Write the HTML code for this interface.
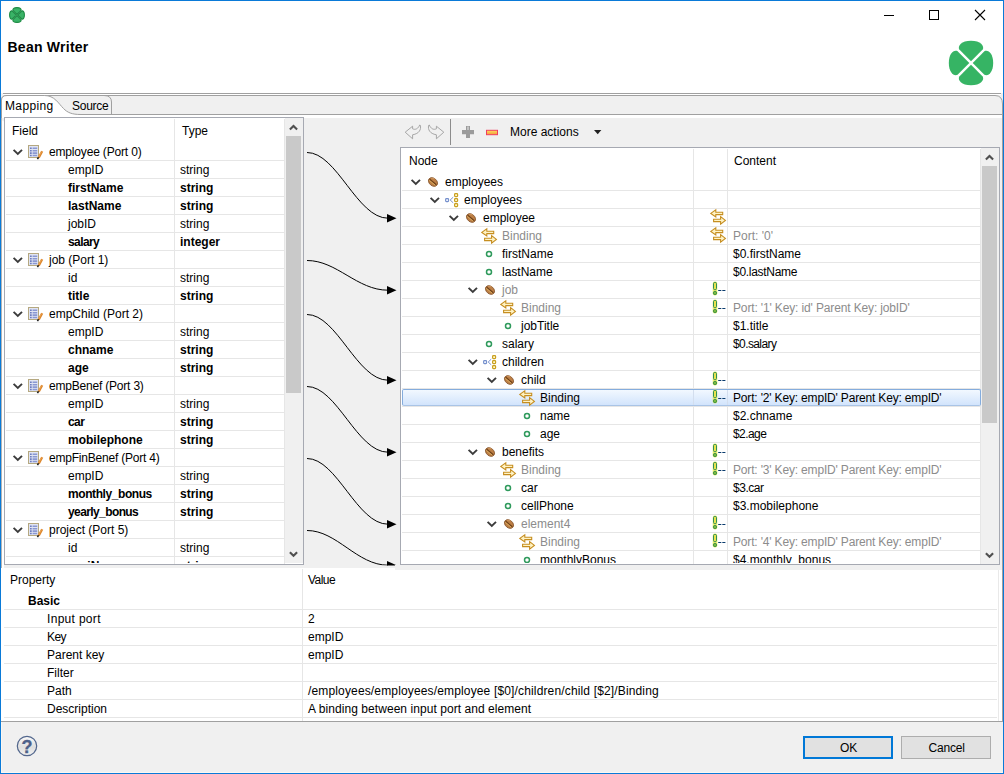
<!DOCTYPE html>
<html lang="en"><head><meta charset="utf-8"><title>Bean Writer</title>
<style>
*{box-sizing:border-box;margin:0;padding:0}
html,body{width:1004px;height:774px;overflow:hidden;background:#f0f0f0}
body{position:relative;font-family:"Liberation Sans",sans-serif;font-size:12px;color:#000;line-height:18px}
.a{position:absolute}
.t{position:absolute;white-space:pre;height:18px;line-height:18px}
.b{font-weight:bold}
.g{color:#8c8c8c}
.hl{position:absolute;height:1px;background:#e6e6e6}
.vl{position:absolute;width:1px;background:#e6e6e6}
svg{position:absolute;overflow:visible}
</style></head>
<body>
<div class="a" style="left:1px;top:1px;width:1002px;height:92px;background:#fff;"></div>
<svg style="left:880px;top:5px" width="110" height="20" viewBox="880 5 110 20" fill="none" stroke="#000" stroke-width="1"><path d="M884 15.5H894"/><rect x="929.5" y="10.5" width="9" height="9"/><path d="M975 10L985 20M985 10L975 20" stroke-width="1.1"/></svg>
<svg style="left:9px;top:7px" width="16" height="16" viewBox="-8 -8 16 16"><g fill="#3ab367" stroke="#1d8a44" stroke-width="1.100" stroke-linejoin="round"><path transform="rotate(0)" d="M0 -0.600L-4 -4.700C-4.600 -6.100 -3.100 -7.400 0 -7.400C3.100 -7.400 4.600 -6.100 4 -4.700Z"/><path transform="rotate(90)" d="M0 -0.600L-4 -4.700C-4.600 -6.100 -3.100 -7.400 0 -7.400C3.100 -7.400 4.600 -6.100 4 -4.700Z"/><path transform="rotate(180)" d="M0 -0.600L-4 -4.700C-4.600 -6.100 -3.100 -7.400 0 -7.400C3.100 -7.400 4.600 -6.100 4 -4.700Z"/><path transform="rotate(270)" d="M0 -0.600L-4 -4.700C-4.600 -6.100 -3.100 -7.400 0 -7.400C3.100 -7.400 4.600 -6.100 4 -4.700Z"/></g></svg>
<div class="t b" style="left:7.500px;top:37px;font-size:14px;height:20px;line-height:20px;letter-spacing:0.250px">Bean Writer</div>
<svg style="left:948px;top:40px" width="46" height="46" viewBox="-23 -23 46 46"><g fill="#36b464"><path transform="rotate(0)" d="M0 -1.700L-11.700 -13.400C-13.700 -17 -9.500 -22.200 0 -22.200C9.500 -22.200 13.700 -17 11.700 -13.400Z"/><path transform="rotate(90)" d="M0 -1.700L-11.700 -13.400C-13.700 -17 -9.500 -22.200 0 -22.200C9.500 -22.200 13.700 -17 11.700 -13.400Z"/><path transform="rotate(180)" d="M0 -1.700L-11.700 -13.400C-13.700 -17 -9.500 -22.200 0 -22.200C9.500 -22.200 13.700 -17 11.700 -13.400Z"/><path transform="rotate(270)" d="M0 -1.700L-11.700 -13.400C-13.700 -17 -9.500 -22.200 0 -22.200C9.500 -22.200 13.700 -17 11.700 -13.400Z"/></g></svg>
<div class="a" style="left:3px;top:93px;width:998px;height:1px;background:#a0a0a0;"></div>
<div class="a" style="left:3px;top:94px;width:998px;height:1px;background:#fff;"></div>
<div class="a" style="left:1px;top:114px;width:1001px;height:608px;background:#fff;"></div>
<div class="a" style="left:4px;top:115px;width:996px;height:453px;background:#f0f0f0;"></div>
<svg style="left:0px;top:94px" width="1004" height="24" viewBox="0 94 1004 24" fill="none"><path d="M1.5 120V100Q1.5 95.5 7 95.5H995Q1002.5 95.5 1002.5 104V722" stroke="#a0a0a0" fill="#f0f0f0"/><path d="M1.5 115V100Q1.5 95.5 7 95.5H44.500C54.500 95.5 58.500 103.500 63.500 108.500C67.500 112.500 71.500 114.5 81 114.5H1002V118H1.5Z" fill="#fff" stroke="none"/><path d="M1.5 118V100Q1.5 95.5 7 95.5H44.500C54.500 95.5 58.500 103.500 63.500 108.500C67.500 112.500 71.500 114.5 81 114.5H1002.5" stroke="#a0a0a0"/><path d="M104 95.5Q111.500 95.5 111.500 102V114" stroke="#a0a0a0"/></svg>
<div class="a" style="left:1002px;top:118px;width:1px;height:604px;background:#a0a0a0;"></div>
<div class="a" style="left:1px;top:118px;width:1px;height:604px;background:#b4b4b4;"></div>
<div class="t" style="left:5px;top:97px;letter-spacing:0.37px;">Mapping</div>
<div class="t" style="left:72px;top:97px;letter-spacing:-0.25px;">Source</div>
<div class="a" style="left:4px;top:117px;width:300px;height:448px;background:#fff;border:1px solid #a6a9b2;"></div>
<div class="a" style="left:285px;top:118px;width:18px;height:445px;background:#f0f0f0;"></div>
<div class="a" style="left:286px;top:136px;width:15px;height:257px;background:#c9c9c9;"></div>
<svg style="left:289px;top:124px" width="9" height="7" viewBox="0 0 9 7" fill="none" stroke="#505050" stroke-width="2.100"><path d="M0.900 5.600L4.500 2L8.100 5.600"/></svg>
<svg style="left:289px;top:551px" width="9" height="7" viewBox="0 0 9 7" fill="none" stroke="#505050" stroke-width="2.100"><path d="M0.900 1.200L4.500 4.800L8.100 1.200"/></svg>
<div class="t" style="left:12px;top:122px;">Field</div>
<div class="t" style="left:182px;top:122px;">Type</div>
<div class="a" style="left:174px;top:119px;width:1px;height:445px;background:#e6e6e6;"></div>
<div class="a" style="left:284px;top:119px;width:1px;height:445px;background:#e6e6e6;"></div>
<div class="a" style="left:5px;top:118px;width:280px;height:445px;overflow:hidden">
<div class="hl" style="left:1px;top:42px;width:279px"></div>
<svg style="left:8px;top:31px" width="10" height="7" viewBox="0 0 10 7" fill="none" stroke="#3c3c3c" stroke-width="1.9"><path d="M0.600 0.800L4.800 5L9 0.800"/></svg>
<svg style="left:23px;top:27px" width="17" height="15" viewBox="0 0 17 15"><rect x="0.5" y="0.5" width="10" height="12" fill="#e0e4f3" stroke="#b5a880"/><path d="M2 3.300H3.700M2 5.700H3.700M2 8.100H3.700M2 10.500H3.700" stroke="#6c7cc0" stroke-width="1.600"/><path d="M4.600 3.300H9.200M4.600 5.700H9.200M4.600 8.100H9.200M4.600 10.500H9.200" stroke="#8a98d2" stroke-width="1.600"/><path d="M14.200 6.300L10.700 12.600" stroke="#dc862c" stroke-width="2.300"/><path d="M13.600 6.500L10.300 12.500" stroke="#f0ac5c" stroke-width="0.700"/><path d="M10.600 12.300L9.400 14.100" stroke="#222" stroke-width="1.600"/></svg>
<div class="t" style="left:44px;top:25px;letter-spacing:-0.17px;">employee (Port 0)</div>
<div class="hl" style="left:1px;top:60px;width:279px"></div>
<div class="t" style="left:63px;top:43px;">empID</div>
<div class="t" style="left:175px;top:43px;">string</div>
<div class="hl" style="left:1px;top:78px;width:279px"></div>
<div class="t b" style="left:63px;top:61px;">firstName</div>
<div class="t b" style="left:175px;top:61px;">string</div>
<div class="hl" style="left:1px;top:96px;width:279px"></div>
<div class="t b" style="left:63px;top:79px;">lastName</div>
<div class="t b" style="left:175px;top:79px;">string</div>
<div class="hl" style="left:1px;top:114px;width:279px"></div>
<div class="t" style="left:63px;top:97px;">jobID</div>
<div class="t" style="left:175px;top:97px;">string</div>
<div class="hl" style="left:1px;top:132px;width:279px"></div>
<div class="t b" style="left:63px;top:115px;letter-spacing:-0.6px;">salary</div>
<div class="t b" style="left:175px;top:115px;">integer</div>
<div class="hl" style="left:1px;top:150px;width:279px"></div>
<svg style="left:8px;top:139px" width="10" height="7" viewBox="0 0 10 7" fill="none" stroke="#3c3c3c" stroke-width="1.9"><path d="M0.600 0.800L4.800 5L9 0.800"/></svg>
<svg style="left:23px;top:135px" width="17" height="15" viewBox="0 0 17 15"><rect x="0.5" y="0.5" width="10" height="12" fill="#e0e4f3" stroke="#b5a880"/><path d="M2 3.300H3.700M2 5.700H3.700M2 8.100H3.700M2 10.500H3.700" stroke="#6c7cc0" stroke-width="1.600"/><path d="M4.600 3.300H9.200M4.600 5.700H9.200M4.600 8.100H9.200M4.600 10.500H9.200" stroke="#8a98d2" stroke-width="1.600"/><path d="M14.200 6.300L10.700 12.600" stroke="#dc862c" stroke-width="2.300"/><path d="M13.600 6.500L10.300 12.500" stroke="#f0ac5c" stroke-width="0.700"/><path d="M10.600 12.300L9.400 14.100" stroke="#222" stroke-width="1.600"/></svg>
<div class="t" style="left:44px;top:133px;">job (Port 1)</div>
<div class="hl" style="left:1px;top:168px;width:279px"></div>
<div class="t" style="left:63px;top:151px;">id</div>
<div class="t" style="left:175px;top:151px;">string</div>
<div class="hl" style="left:1px;top:186px;width:279px"></div>
<div class="t b" style="left:63px;top:169px;">title</div>
<div class="t b" style="left:175px;top:169px;">string</div>
<div class="hl" style="left:1px;top:204px;width:279px"></div>
<svg style="left:8px;top:193px" width="10" height="7" viewBox="0 0 10 7" fill="none" stroke="#3c3c3c" stroke-width="1.9"><path d="M0.600 0.800L4.800 5L9 0.800"/></svg>
<svg style="left:23px;top:189px" width="17" height="15" viewBox="0 0 17 15"><rect x="0.5" y="0.5" width="10" height="12" fill="#e0e4f3" stroke="#b5a880"/><path d="M2 3.300H3.700M2 5.700H3.700M2 8.100H3.700M2 10.500H3.700" stroke="#6c7cc0" stroke-width="1.600"/><path d="M4.600 3.300H9.200M4.600 5.700H9.200M4.600 8.100H9.200M4.600 10.500H9.200" stroke="#8a98d2" stroke-width="1.600"/><path d="M14.200 6.300L10.700 12.600" stroke="#dc862c" stroke-width="2.300"/><path d="M13.600 6.500L10.300 12.500" stroke="#f0ac5c" stroke-width="0.700"/><path d="M10.600 12.300L9.400 14.100" stroke="#222" stroke-width="1.600"/></svg>
<div class="t" style="left:44px;top:187px;">empChild (Port 2)</div>
<div class="hl" style="left:1px;top:222px;width:279px"></div>
<div class="t" style="left:63px;top:205px;">empID</div>
<div class="t" style="left:175px;top:205px;">string</div>
<div class="hl" style="left:1px;top:240px;width:279px"></div>
<div class="t b" style="left:63px;top:223px;">chname</div>
<div class="t b" style="left:175px;top:223px;">string</div>
<div class="hl" style="left:1px;top:258px;width:279px"></div>
<div class="t b" style="left:63px;top:241px;">age</div>
<div class="t b" style="left:175px;top:241px;">string</div>
<div class="hl" style="left:1px;top:276px;width:279px"></div>
<svg style="left:8px;top:265px" width="10" height="7" viewBox="0 0 10 7" fill="none" stroke="#3c3c3c" stroke-width="1.9"><path d="M0.600 0.800L4.800 5L9 0.800"/></svg>
<svg style="left:23px;top:261px" width="17" height="15" viewBox="0 0 17 15"><rect x="0.5" y="0.5" width="10" height="12" fill="#e0e4f3" stroke="#b5a880"/><path d="M2 3.300H3.700M2 5.700H3.700M2 8.100H3.700M2 10.500H3.700" stroke="#6c7cc0" stroke-width="1.600"/><path d="M4.600 3.300H9.200M4.600 5.700H9.200M4.600 8.100H9.200M4.600 10.500H9.200" stroke="#8a98d2" stroke-width="1.600"/><path d="M14.200 6.300L10.700 12.600" stroke="#dc862c" stroke-width="2.300"/><path d="M13.600 6.500L10.300 12.500" stroke="#f0ac5c" stroke-width="0.700"/><path d="M10.600 12.300L9.400 14.100" stroke="#222" stroke-width="1.600"/></svg>
<div class="t" style="left:44px;top:259px;letter-spacing:-0.2px;">empBenef (Port 3)</div>
<div class="hl" style="left:1px;top:294px;width:279px"></div>
<div class="t" style="left:63px;top:277px;">empID</div>
<div class="t" style="left:175px;top:277px;">string</div>
<div class="hl" style="left:1px;top:312px;width:279px"></div>
<div class="t b" style="left:63px;top:295px;letter-spacing:-0.6px;">car</div>
<div class="t b" style="left:175px;top:295px;">string</div>
<div class="hl" style="left:1px;top:330px;width:279px"></div>
<div class="t b" style="left:63px;top:313px;">mobilephone</div>
<div class="t b" style="left:175px;top:313px;">string</div>
<div class="hl" style="left:1px;top:348px;width:279px"></div>
<svg style="left:8px;top:337px" width="10" height="7" viewBox="0 0 10 7" fill="none" stroke="#3c3c3c" stroke-width="1.9"><path d="M0.600 0.800L4.800 5L9 0.800"/></svg>
<svg style="left:23px;top:333px" width="17" height="15" viewBox="0 0 17 15"><rect x="0.5" y="0.5" width="10" height="12" fill="#e0e4f3" stroke="#b5a880"/><path d="M2 3.300H3.700M2 5.700H3.700M2 8.100H3.700M2 10.500H3.700" stroke="#6c7cc0" stroke-width="1.600"/><path d="M4.600 3.300H9.200M4.600 5.700H9.200M4.600 8.100H9.200M4.600 10.500H9.200" stroke="#8a98d2" stroke-width="1.600"/><path d="M14.200 6.300L10.700 12.600" stroke="#dc862c" stroke-width="2.300"/><path d="M13.600 6.500L10.300 12.500" stroke="#f0ac5c" stroke-width="0.700"/><path d="M10.600 12.300L9.400 14.100" stroke="#222" stroke-width="1.600"/></svg>
<div class="t" style="left:44px;top:331px;letter-spacing:-0.21px;">empFinBenef (Port 4)</div>
<div class="hl" style="left:1px;top:366px;width:279px"></div>
<div class="t" style="left:63px;top:349px;">empID</div>
<div class="t" style="left:175px;top:349px;">string</div>
<div class="hl" style="left:1px;top:384px;width:279px"></div>
<div class="t b" style="left:63px;top:367px;letter-spacing:-0.42px;">monthly_bonus</div>
<div class="t b" style="left:175px;top:367px;">string</div>
<div class="hl" style="left:1px;top:402px;width:279px"></div>
<div class="t b" style="left:63px;top:385px;letter-spacing:-0.6px;">yearly_bonus</div>
<div class="t b" style="left:175px;top:385px;">string</div>
<div class="hl" style="left:1px;top:420px;width:279px"></div>
<svg style="left:8px;top:409px" width="10" height="7" viewBox="0 0 10 7" fill="none" stroke="#3c3c3c" stroke-width="1.9"><path d="M0.600 0.800L4.800 5L9 0.800"/></svg>
<svg style="left:23px;top:405px" width="17" height="15" viewBox="0 0 17 15"><rect x="0.5" y="0.5" width="10" height="12" fill="#e0e4f3" stroke="#b5a880"/><path d="M2 3.300H3.700M2 5.700H3.700M2 8.100H3.700M2 10.500H3.700" stroke="#6c7cc0" stroke-width="1.600"/><path d="M4.600 3.300H9.200M4.600 5.700H9.200M4.600 8.100H9.200M4.600 10.500H9.200" stroke="#8a98d2" stroke-width="1.600"/><path d="M14.200 6.300L10.700 12.600" stroke="#dc862c" stroke-width="2.300"/><path d="M13.600 6.500L10.300 12.500" stroke="#f0ac5c" stroke-width="0.700"/><path d="M10.600 12.300L9.400 14.100" stroke="#222" stroke-width="1.600"/></svg>
<div class="t" style="left:44px;top:403px;">project (Port 5)</div>
<div class="hl" style="left:1px;top:438px;width:279px"></div>
<div class="t" style="left:63px;top:421px;">id</div>
<div class="t" style="left:175px;top:421px;">string</div>
<div class="hl" style="left:1px;top:456px;width:279px"></div>
<div class="t b" style="left:63px;top:439px;">projName</div>
<div class="t b" style="left:175px;top:439px;">string</div>
</div>
<svg style="left:304px;top:118px" width="96" height="448" viewBox="304 118 96 448"><defs><clipPath id="cc"><rect x="304" y="118" width="96" height="447.500"/></clipPath></defs><g clip-path="url(#cc)" fill="none" stroke="#000" stroke-width="1"><path d="M307 152.5C337 152.5 357 218.2 388 218.2"/><path d="M387 214L396.5 218.2L387 222.4Z" fill="#000" stroke="none"/><path d="M307 260.5C337 260.5 357 290.2 388 290.2"/><path d="M387 286L396.5 290.2L387 294.4Z" fill="#000" stroke="none"/><path d="M307 314.5C337 314.5 357 380.2 388 380.2"/><path d="M387 376L396.5 380.2L387 384.4Z" fill="#000" stroke="none"/><path d="M307 386.5C337 386.5 357 452.2 388 452.2"/><path d="M387 448L396.5 452.2L387 456.4Z" fill="#000" stroke="none"/><path d="M307 458.5C337 458.5 357 524.2 388 524.2"/><path d="M387 520L396.5 524.2L387 528.4Z" fill="#000" stroke="none"/><path d="M307 530.5C337 530.5 357 565.2 388 565.2"/><path d="M387 561L396.5 565.2L387 569.4Z" fill="#000" stroke="none"/></g></svg>
<svg style="left:404px;top:119px" width="100" height="26" viewBox="404 119 100 26" fill="none"><path d="M405.200 132.200L412.600 126.200V128.800C415.500 130.200 418.200 128.600 419.700 125L420.400 125.400C421.200 129.500 419.400 133.600 412.600 134.800V138.800Z" stroke="#a6a6a6" stroke-width="1"/><path d="M443.800 132.200L436.400 126.200V128.800C433.500 130.200 430.800 128.600 429.300 125L428.600 125.400C427.800 129.500 429.600 133.600 436.400 134.800V138.800Z" stroke="#a6a6a6" stroke-width="1"/><path d="M450.500 119V145" stroke="#8c8c8c"/><path d="M466 126H470V130H474V134.300H470V138H466V134.300H462V130H466Z" fill="#9b9b9b"/><path d="M467 126.500H469V130H467Z" fill="#c4c4c4"/><defs><linearGradient id="mg" x1="0" y1="0" x2="0" y2="1"><stop offset="0" stop-color="#fbe060"/><stop offset="1" stop-color="#f49a3a"/></linearGradient></defs><rect x="486.500" y="130.300" width="11" height="4.400" fill="url(#mg)" stroke="#f03e5e"/></svg>
<div class="t" style="left:510px;top:123px;">More actions</div>
<svg style="left:594.300px;top:130px" width="8" height="5" viewBox="0 0 8 5"><path d="M0 0H7.400L3.700 4.300Z" fill="#202020"/></svg>
<div class="a" style="left:400px;top:147px;width:600px;height:418px;background:#fff;border:1px solid #a6a9b2;"></div>
<div class="a" style="left:981px;top:148px;width:18px;height:416px;background:#f0f0f0;"></div>
<div class="a" style="left:982px;top:166px;width:15px;height:257px;background:#c9c9c9;"></div>
<svg style="left:985px;top:154px" width="9" height="7" viewBox="0 0 9 7" fill="none" stroke="#505050" stroke-width="2.100"><path d="M0.900 5.600L4.500 2L8.100 5.600"/></svg>
<svg style="left:985px;top:552px" width="9" height="7" viewBox="0 0 9 7" fill="none" stroke="#505050" stroke-width="2.100"><path d="M0.900 1.200L4.500 4.800L8.100 1.200"/></svg>
<div class="a" style="left:693px;top:149px;width:1px;height:415px;background:#e6e6e6;"></div>
<div class="a" style="left:727px;top:149px;width:1px;height:415px;background:#e6e6e6;"></div>
<div class="a" style="left:980px;top:149px;width:1px;height:415px;background:#e6e6e6;"></div>
<div class="t" style="left:409px;top:152px;">Node</div>
<div class="t" style="left:734px;top:152px;">Content</div>
<div class="a" style="left:401px;top:148px;width:580px;height:415px;overflow:hidden">
<div class="hl" style="left:1px;top:42px;width:579px"></div>
<svg style="left:10px;top:31px" width="10" height="7" viewBox="0 0 10 7" fill="none" stroke="#3c3c3c" stroke-width="1.9"><path d="M0.600 0.800L4.800 5L9 0.800"/></svg>
<svg style="left:27px;top:29px" width="10" height="10" viewBox="0 0 10 10"><ellipse cx="5" cy="5" rx="5" ry="3.700" transform="rotate(40 5 5)" fill="#bd7f45" stroke="#86542a" stroke-width="0.900"/><path d="M1.700 2.300L8.300 7.700" stroke="#6e4019" stroke-width="1.200"/><path d="M1.300 3.300L7.300 8.300" stroke="#ecc46c" stroke-width="0.700"/><path d="M3.200 1.500Q5 0.900 6.800 1.800" stroke="#dca56a" stroke-width="0.700" fill="none"/></svg>
<div class="t" style="left:44px;top:25px;">employees</div>
<div class="hl" style="left:1px;top:60px;width:579px"></div>
<svg style="left:29px;top:49px" width="10" height="7" viewBox="0 0 10 7" fill="none" stroke="#3c3c3c" stroke-width="1.9"><path d="M0.600 0.800L4.800 5L9 0.800"/></svg>
<svg style="left:44px;top:45px" width="14" height="14" viewBox="0 0 14 14" fill="none"><rect x="0.600" y="5.600" width="3" height="3" rx="0.800" stroke="#7590cc" stroke-width="1.100" fill="#eef2fd"/><path d="M5.200 7L8.200 4.200M5.200 7L8.200 9.800" stroke="#6a86c4" stroke-width="0.900"/><rect x="9.600" y="0.600" width="3" height="3" rx="0.800" stroke="#c9a01f" stroke-width="1.200" fill="#fff8d0"/><rect x="9.600" y="5.600" width="3" height="3" rx="0.800" stroke="#c9a01f" stroke-width="1.200" fill="#fff8d0"/><rect x="9.600" y="10.600" width="3" height="3" rx="0.800" stroke="#c9a01f" stroke-width="1.200" fill="#fff8d0"/></svg>
<div class="t" style="left:63px;top:43px;">employees</div>
<div class="hl" style="left:1px;top:78px;width:579px"></div>
<svg style="left:48px;top:67px" width="10" height="7" viewBox="0 0 10 7" fill="none" stroke="#3c3c3c" stroke-width="1.9"><path d="M0.600 0.800L4.800 5L9 0.800"/></svg>
<svg style="left:65px;top:65px" width="10" height="10" viewBox="0 0 10 10"><ellipse cx="5" cy="5" rx="5" ry="3.700" transform="rotate(40 5 5)" fill="#bd7f45" stroke="#86542a" stroke-width="0.900"/><path d="M1.700 2.300L8.300 7.700" stroke="#6e4019" stroke-width="1.200"/><path d="M1.300 3.300L7.300 8.300" stroke="#ecc46c" stroke-width="0.700"/><path d="M3.200 1.500Q5 0.900 6.800 1.800" stroke="#dca56a" stroke-width="0.700" fill="none"/></svg>
<div class="t" style="left:82px;top:61px;">employee</div>
<svg style="left:309px;top:61px" width="16" height="16" viewBox="0 0 16 16" fill="#fff3c4" stroke="#c68e20" stroke-width="1.1" stroke-linejoin="miter"><path d="M0.800 4.400L5.800 0.800V3.200H12.700V5.600H5.800V8Z"/><path d="M15.400 11.400L10.600 7.600V10.200H3.600V12.600H10.600V15.200Z"/></svg>
<div class="hl" style="left:1px;top:96px;width:579px"></div>
<svg style="left:80px;top:80px" width="16" height="16" viewBox="0 0 16 16" fill="#fff3c4" stroke="#c68e20" stroke-width="1.1" stroke-linejoin="miter"><path d="M0.800 4.400L5.800 0.800V3.200H12.700V5.600H5.800V8Z"/><path d="M15.400 11.400L10.600 7.600V10.200H3.600V12.600H10.600V15.200Z"/></svg>
<div class="t g" style="left:101px;top:79px;">Binding</div>
<svg style="left:309px;top:79px" width="16" height="16" viewBox="0 0 16 16" fill="#fff3c4" stroke="#c68e20" stroke-width="1.1" stroke-linejoin="miter"><path d="M0.800 4.400L5.800 0.800V3.200H12.700V5.600H5.800V8Z"/><path d="M15.400 11.400L10.600 7.600V10.200H3.600V12.600H10.600V15.200Z"/></svg>
<div class="t g" style="left:332px;top:79px;">Port: '0'</div>
<div class="hl" style="left:1px;top:114px;width:579px"></div>
<svg style="left:84px;top:102px" width="8" height="8" viewBox="0 0 8 8"><circle cx="4" cy="4" r="2.500" fill="#fff" stroke="#2f9a5c" stroke-width="1.5"/></svg>
<div class="t" style="left:101px;top:97px;">firstName</div>
<div class="t" style="left:332px;top:97px;">$0.firstName</div>
<div class="hl" style="left:1px;top:132px;width:579px"></div>
<svg style="left:84px;top:120px" width="8" height="8" viewBox="0 0 8 8"><circle cx="4" cy="4" r="2.500" fill="#fff" stroke="#2f9a5c" stroke-width="1.5"/></svg>
<div class="t" style="left:101px;top:115px;">lastName</div>
<div class="t" style="left:332px;top:115px;letter-spacing:-0.29px;">$0.lastName</div>
<div class="hl" style="left:1px;top:150px;width:579px"></div>
<svg style="left:67px;top:139px" width="10" height="7" viewBox="0 0 10 7" fill="none" stroke="#3c3c3c" stroke-width="1.9"><path d="M0.600 0.800L4.800 5L9 0.800"/></svg>
<svg style="left:84px;top:137px" width="10" height="10" viewBox="0 0 10 10"><ellipse cx="5" cy="5" rx="5" ry="3.700" transform="rotate(40 5 5)" fill="#bd7f45" stroke="#86542a" stroke-width="0.900"/><path d="M1.700 2.300L8.300 7.700" stroke="#6e4019" stroke-width="1.200"/><path d="M1.300 3.300L7.300 8.300" stroke="#ecc46c" stroke-width="0.700"/><path d="M3.200 1.500Q5 0.900 6.800 1.800" stroke="#dca56a" stroke-width="0.700" fill="none"/></svg>
<div class="t g" style="left:101px;top:133px;">job</div>
<svg style="left:311px;top:133px" width="15" height="15" viewBox="0 0 15 15"><rect x="0.700" y="0.500" width="4.600" height="14" rx="2.200" fill="#eef05a" opacity="0.85"/><rect x="1.500" y="1.400" width="3" height="7.300" rx="1.300" fill="#e8e44c" stroke="#2f8f58" stroke-width="1"/><circle cx="3" cy="12" r="1.700" fill="#7cba3c" stroke="#3a9048" stroke-width="0.9"/><path d="M6.200 9.500H9.300M10.300 9.500H13.400" stroke="#0b3c6e" stroke-width="1.200"/></svg>
<div class="hl" style="left:1px;top:168px;width:579px"></div>
<svg style="left:99px;top:152px" width="16" height="16" viewBox="0 0 16 16" fill="#fff3c4" stroke="#c68e20" stroke-width="1.1" stroke-linejoin="miter"><path d="M0.800 4.400L5.800 0.800V3.200H12.700V5.600H5.800V8Z"/><path d="M15.400 11.400L10.600 7.600V10.200H3.600V12.600H10.600V15.200Z"/></svg>
<div class="t g" style="left:120px;top:151px;">Binding</div>
<svg style="left:311px;top:151px" width="15" height="15" viewBox="0 0 15 15"><rect x="0.700" y="0.500" width="4.600" height="14" rx="2.200" fill="#eef05a" opacity="0.85"/><rect x="1.500" y="1.400" width="3" height="7.300" rx="1.300" fill="#e8e44c" stroke="#2f8f58" stroke-width="1"/><circle cx="3" cy="12" r="1.700" fill="#7cba3c" stroke="#3a9048" stroke-width="0.9"/><path d="M6.200 9.500H9.300M10.300 9.500H13.400" stroke="#0b3c6e" stroke-width="1.200"/></svg>
<div class="t g" style="left:332px;top:151px;letter-spacing:-0.14px;">Port: '1' Key: id' Parent Key: jobID'</div>
<div class="hl" style="left:1px;top:186px;width:579px"></div>
<svg style="left:103px;top:174px" width="8" height="8" viewBox="0 0 8 8"><circle cx="4" cy="4" r="2.500" fill="#fff" stroke="#2f9a5c" stroke-width="1.5"/></svg>
<div class="t" style="left:120px;top:169px;">jobTitle</div>
<div class="t" style="left:332px;top:169px;">$1.title</div>
<div class="hl" style="left:1px;top:204px;width:579px"></div>
<svg style="left:84px;top:192px" width="8" height="8" viewBox="0 0 8 8"><circle cx="4" cy="4" r="2.500" fill="#fff" stroke="#2f9a5c" stroke-width="1.5"/></svg>
<div class="t" style="left:101px;top:187px;">salary</div>
<div class="t" style="left:332px;top:187px;letter-spacing:-0.6px;">$0.salary</div>
<div class="hl" style="left:1px;top:222px;width:579px"></div>
<svg style="left:67px;top:211px" width="10" height="7" viewBox="0 0 10 7" fill="none" stroke="#3c3c3c" stroke-width="1.9"><path d="M0.600 0.800L4.800 5L9 0.800"/></svg>
<svg style="left:82px;top:207px" width="14" height="14" viewBox="0 0 14 14" fill="none"><rect x="0.600" y="5.600" width="3" height="3" rx="0.800" stroke="#7590cc" stroke-width="1.100" fill="#eef2fd"/><path d="M5.200 7L8.200 4.200M5.200 7L8.200 9.800" stroke="#6a86c4" stroke-width="0.900"/><rect x="9.600" y="0.600" width="3" height="3" rx="0.800" stroke="#c9a01f" stroke-width="1.200" fill="#fff8d0"/><rect x="9.600" y="5.600" width="3" height="3" rx="0.800" stroke="#c9a01f" stroke-width="1.200" fill="#fff8d0"/><rect x="9.600" y="10.600" width="3" height="3" rx="0.800" stroke="#c9a01f" stroke-width="1.200" fill="#fff8d0"/></svg>
<div class="t" style="left:101px;top:205px;">children</div>
<div class="hl" style="left:1px;top:240px;width:579px"></div>
<svg style="left:86px;top:229px" width="10" height="7" viewBox="0 0 10 7" fill="none" stroke="#3c3c3c" stroke-width="1.9"><path d="M0.600 0.800L4.800 5L9 0.800"/></svg>
<svg style="left:103px;top:227px" width="10" height="10" viewBox="0 0 10 10"><ellipse cx="5" cy="5" rx="5" ry="3.700" transform="rotate(40 5 5)" fill="#bd7f45" stroke="#86542a" stroke-width="0.900"/><path d="M1.700 2.300L8.300 7.700" stroke="#6e4019" stroke-width="1.200"/><path d="M1.300 3.300L7.300 8.300" stroke="#ecc46c" stroke-width="0.700"/><path d="M3.200 1.500Q5 0.900 6.800 1.800" stroke="#dca56a" stroke-width="0.700" fill="none"/></svg>
<div class="t" style="left:120px;top:223px;">child</div>
<svg style="left:311px;top:223px" width="15" height="15" viewBox="0 0 15 15"><rect x="0.700" y="0.500" width="4.600" height="14" rx="2.200" fill="#eef05a" opacity="0.85"/><rect x="1.500" y="1.400" width="3" height="7.300" rx="1.300" fill="#e8e44c" stroke="#2f8f58" stroke-width="1"/><circle cx="3" cy="12" r="1.700" fill="#7cba3c" stroke="#3a9048" stroke-width="0.9"/><path d="M6.200 9.500H9.300M10.300 9.500H13.400" stroke="#0b3c6e" stroke-width="1.200"/></svg>
<div class="hl" style="left:1px;top:258px;width:579px"></div>
<div class="a" style="left:1px;top:241px;width:579px;height:17px;border:1px solid #84acdd;border-bottom-color:#a9c4e6;border-radius:2px;background:linear-gradient(#f2f8ff,#d2e4fc)"></div>
<div class="a" style="left:292px;top:242px;width:1px;height:15px;background:#d3deee"></div>
<div class="a" style="left:326px;top:242px;width:1px;height:15px;background:#d3deee"></div>
<svg style="left:118px;top:242px" width="16" height="16" viewBox="0 0 16 16" fill="#fff3c4" stroke="#c68e20" stroke-width="1.1" stroke-linejoin="miter"><path d="M0.800 4.400L5.800 0.800V3.200H12.700V5.600H5.800V8Z"/><path d="M15.400 11.400L10.600 7.600V10.200H3.600V12.600H10.600V15.200Z"/></svg>
<div class="t" style="left:139px;top:241px;">Binding</div>
<svg style="left:311px;top:241px" width="15" height="15" viewBox="0 0 15 15"><rect x="0.700" y="0.500" width="4.600" height="14" rx="2.200" fill="#eef05a" opacity="0.85"/><rect x="1.500" y="1.400" width="3" height="7.300" rx="1.300" fill="#e8e44c" stroke="#2f8f58" stroke-width="1"/><circle cx="3" cy="12" r="1.700" fill="#7cba3c" stroke="#3a9048" stroke-width="0.9"/><path d="M6.200 9.500H9.300M10.300 9.500H13.400" stroke="#0b3c6e" stroke-width="1.200"/></svg>
<div class="t" style="left:332px;top:241px;letter-spacing:-0.17px;">Port: '2' Key: empID' Parent Key: empID'</div>
<div class="hl" style="left:1px;top:276px;width:579px"></div>
<svg style="left:122px;top:264px" width="8" height="8" viewBox="0 0 8 8"><circle cx="4" cy="4" r="2.500" fill="#fff" stroke="#2f9a5c" stroke-width="1.5"/></svg>
<div class="t" style="left:139px;top:259px;">name</div>
<div class="t" style="left:332px;top:259px;">$2.chname</div>
<div class="hl" style="left:1px;top:294px;width:579px"></div>
<svg style="left:122px;top:282px" width="8" height="8" viewBox="0 0 8 8"><circle cx="4" cy="4" r="2.500" fill="#fff" stroke="#2f9a5c" stroke-width="1.5"/></svg>
<div class="t" style="left:139px;top:277px;">age</div>
<div class="t" style="left:332px;top:277px;letter-spacing:-0.56px;">$2.age</div>
<div class="hl" style="left:1px;top:312px;width:579px"></div>
<svg style="left:67px;top:301px" width="10" height="7" viewBox="0 0 10 7" fill="none" stroke="#3c3c3c" stroke-width="1.9"><path d="M0.600 0.800L4.800 5L9 0.800"/></svg>
<svg style="left:84px;top:299px" width="10" height="10" viewBox="0 0 10 10"><ellipse cx="5" cy="5" rx="5" ry="3.700" transform="rotate(40 5 5)" fill="#bd7f45" stroke="#86542a" stroke-width="0.900"/><path d="M1.700 2.300L8.300 7.700" stroke="#6e4019" stroke-width="1.200"/><path d="M1.300 3.300L7.300 8.300" stroke="#ecc46c" stroke-width="0.700"/><path d="M3.200 1.500Q5 0.900 6.800 1.800" stroke="#dca56a" stroke-width="0.700" fill="none"/></svg>
<div class="t" style="left:101px;top:295px;">benefits</div>
<svg style="left:311px;top:295px" width="15" height="15" viewBox="0 0 15 15"><rect x="0.700" y="0.500" width="4.600" height="14" rx="2.200" fill="#eef05a" opacity="0.85"/><rect x="1.500" y="1.400" width="3" height="7.300" rx="1.300" fill="#e8e44c" stroke="#2f8f58" stroke-width="1"/><circle cx="3" cy="12" r="1.700" fill="#7cba3c" stroke="#3a9048" stroke-width="0.9"/><path d="M6.200 9.500H9.300M10.300 9.500H13.400" stroke="#0b3c6e" stroke-width="1.200"/></svg>
<div class="hl" style="left:1px;top:330px;width:579px"></div>
<svg style="left:99px;top:314px" width="16" height="16" viewBox="0 0 16 16" fill="#fff3c4" stroke="#c68e20" stroke-width="1.1" stroke-linejoin="miter"><path d="M0.800 4.400L5.800 0.800V3.200H12.700V5.600H5.800V8Z"/><path d="M15.400 11.400L10.600 7.600V10.200H3.600V12.600H10.600V15.200Z"/></svg>
<div class="t g" style="left:120px;top:313px;">Binding</div>
<svg style="left:311px;top:313px" width="15" height="15" viewBox="0 0 15 15"><rect x="0.700" y="0.500" width="4.600" height="14" rx="2.200" fill="#eef05a" opacity="0.85"/><rect x="1.500" y="1.400" width="3" height="7.300" rx="1.300" fill="#e8e44c" stroke="#2f8f58" stroke-width="1"/><circle cx="3" cy="12" r="1.700" fill="#7cba3c" stroke="#3a9048" stroke-width="0.9"/><path d="M6.200 9.500H9.300M10.300 9.500H13.400" stroke="#0b3c6e" stroke-width="1.200"/></svg>
<div class="t g" style="left:332px;top:313px;letter-spacing:-0.17px;">Port: '3' Key: empID' Parent Key: empID'</div>
<div class="hl" style="left:1px;top:348px;width:579px"></div>
<svg style="left:103px;top:336px" width="8" height="8" viewBox="0 0 8 8"><circle cx="4" cy="4" r="2.500" fill="#fff" stroke="#2f9a5c" stroke-width="1.5"/></svg>
<div class="t" style="left:120px;top:331px;">car</div>
<div class="t" style="left:332px;top:331px;letter-spacing:-0.48px;">$3.car</div>
<div class="hl" style="left:1px;top:366px;width:579px"></div>
<svg style="left:103px;top:354px" width="8" height="8" viewBox="0 0 8 8"><circle cx="4" cy="4" r="2.500" fill="#fff" stroke="#2f9a5c" stroke-width="1.5"/></svg>
<div class="t" style="left:120px;top:349px;">cellPhone</div>
<div class="t" style="left:332px;top:349px;">$3.mobilephone</div>
<div class="hl" style="left:1px;top:384px;width:579px"></div>
<svg style="left:86px;top:373px" width="10" height="7" viewBox="0 0 10 7" fill="none" stroke="#3c3c3c" stroke-width="1.9"><path d="M0.600 0.800L4.800 5L9 0.800"/></svg>
<svg style="left:103px;top:371px" width="10" height="10" viewBox="0 0 10 10"><ellipse cx="5" cy="5" rx="5" ry="3.700" transform="rotate(40 5 5)" fill="#bd7f45" stroke="#86542a" stroke-width="0.900"/><path d="M1.700 2.300L8.300 7.700" stroke="#6e4019" stroke-width="1.200"/><path d="M1.300 3.300L7.300 8.300" stroke="#ecc46c" stroke-width="0.700"/><path d="M3.200 1.500Q5 0.900 6.800 1.800" stroke="#dca56a" stroke-width="0.700" fill="none"/></svg>
<div class="t g" style="left:120px;top:367px;">element4</div>
<svg style="left:311px;top:367px" width="15" height="15" viewBox="0 0 15 15"><rect x="0.700" y="0.500" width="4.600" height="14" rx="2.200" fill="#eef05a" opacity="0.85"/><rect x="1.500" y="1.400" width="3" height="7.300" rx="1.300" fill="#e8e44c" stroke="#2f8f58" stroke-width="1"/><circle cx="3" cy="12" r="1.700" fill="#7cba3c" stroke="#3a9048" stroke-width="0.9"/><path d="M6.200 9.500H9.300M10.300 9.500H13.400" stroke="#0b3c6e" stroke-width="1.200"/></svg>
<div class="hl" style="left:1px;top:402px;width:579px"></div>
<svg style="left:118px;top:386px" width="16" height="16" viewBox="0 0 16 16" fill="#fff3c4" stroke="#c68e20" stroke-width="1.1" stroke-linejoin="miter"><path d="M0.800 4.400L5.800 0.800V3.200H12.700V5.600H5.800V8Z"/><path d="M15.400 11.400L10.600 7.600V10.200H3.600V12.600H10.600V15.200Z"/></svg>
<div class="t g" style="left:139px;top:385px;">Binding</div>
<svg style="left:311px;top:385px" width="15" height="15" viewBox="0 0 15 15"><rect x="0.700" y="0.500" width="4.600" height="14" rx="2.200" fill="#eef05a" opacity="0.85"/><rect x="1.500" y="1.400" width="3" height="7.300" rx="1.300" fill="#e8e44c" stroke="#2f8f58" stroke-width="1"/><circle cx="3" cy="12" r="1.700" fill="#7cba3c" stroke="#3a9048" stroke-width="0.9"/><path d="M6.200 9.500H9.300M10.300 9.500H13.400" stroke="#0b3c6e" stroke-width="1.200"/></svg>
<div class="t g" style="left:332px;top:385px;letter-spacing:-0.17px;">Port: '4' Key: empID' Parent Key: empID'</div>
<div class="hl" style="left:1px;top:420px;width:579px"></div>
<svg style="left:122px;top:408px" width="8" height="8" viewBox="0 0 8 8"><circle cx="4" cy="4" r="2.500" fill="#fff" stroke="#2f9a5c" stroke-width="1.5"/></svg>
<div class="t" style="left:139px;top:403px;">monthlyBonus</div>
<div class="t" style="left:332px;top:403px;">$4.monthly_bonus</div>
</div>
<div class="a" style="left:1px;top:568px;width:1001px;height:153px;background:#fff;"></div>
<div class="a" style="left:395px;top:565px;width:607px;height:5px;background:#f0f0f0;"></div>
<div class="t" style="left:10px;top:571px;">Property</div>
<div class="t" style="left:308px;top:571px;letter-spacing:-0.55px;">Value</div>
<div class="a" style="left:302px;top:569px;width:1px;height:152px;background:#e6e6e6;"></div>
<div class="a" style="left:998px;top:570px;width:1px;height:151px;background:#e9e9e9;"></div>
<div class="t b" style="left:28px;top:592px;">Basic</div>
<div class="a" style="left:4px;top:609px;width:993px;height:1px;background:#e6e6e6;"></div>
<div class="a" style="left:4px;top:627px;width:993px;height:1px;background:#e6e6e6;"></div>
<div class="t" style="left:47px;top:610px;letter-spacing:0.31px;">Input port</div>
<div class="t" style="left:308px;top:610px;">2</div>
<div class="a" style="left:4px;top:645px;width:993px;height:1px;background:#e6e6e6;"></div>
<div class="t" style="left:47px;top:628px;letter-spacing:-0.6px;">Key</div>
<div class="t" style="left:308px;top:628px;">empID</div>
<div class="a" style="left:4px;top:663px;width:993px;height:1px;background:#e6e6e6;"></div>
<div class="t" style="left:47px;top:646px;">Parent key</div>
<div class="t" style="left:308px;top:646px;">empID</div>
<div class="a" style="left:4px;top:681px;width:993px;height:1px;background:#e6e6e6;"></div>
<div class="t" style="left:47px;top:664px;">Filter</div>
<div class="a" style="left:4px;top:699px;width:993px;height:1px;background:#e6e6e6;"></div>
<div class="t" style="left:47px;top:682px;">Path</div>
<div class="t" style="left:308px;top:682px;letter-spacing:0.15px;">/employees/employees/employee [$0]/children/child [$2]/Binding</div>
<div class="a" style="left:4px;top:717px;width:993px;height:1px;background:#e6e6e6;"></div>
<div class="t" style="left:47px;top:700px;">Description</div>
<div class="t" style="left:308px;top:700px;letter-spacing:0.06px;">A binding between input port and element</div>
<div class="a" style="left:1px;top:721px;width:1002px;height:1px;background:#a0a0a0;"></div>
<div class="a" style="left:1px;top:722px;width:1002px;height:51px;background:#f0f0f0;"></div>
<div class="a" style="left:1px;top:722px;width:1px;height:51px;background:#fbf7f2;"></div>
<div class="a" style="left:1px;top:772px;width:1002px;height:1px;background:#fbf7f2;"></div>
<svg style="left:16px;top:735px" width="22" height="22" viewBox="0 0 22 22"><defs><linearGradient id="hg" x1="0" y1="0" x2="0" y2="1"><stop offset="0" stop-color="#fbfbfb"/><stop offset="0.55" stop-color="#dedede"/><stop offset="1" stop-color="#f3f3f3"/></linearGradient></defs><circle cx="11" cy="11" r="9.700" fill="url(#hg)" stroke="#52668c" stroke-width="1.200"/><text x="11" y="17.500" text-anchor="middle" font-family="Liberation Sans, sans-serif" font-weight="bold" font-size="18" fill="#4c6089" stroke="#4c6089" stroke-width="0.300">?</text></svg>
<div class="a" style="left:803px;top:736px;width:90px;height:23px;border:2px solid #0078d7;background:#e1e1e1"></div>
<div class="a" style="left:901px;top:736px;width:90px;height:23px;border:1px solid #adadad;background:#e1e1e1"></div>
<div class="t" style="left:840px;top:739px;">OK</div>
<div class="t" style="left:928.5px;top:739px;letter-spacing:-0.2px;">Cancel</div>
<div class="a" style="left:0;top:0;width:1004px;height:774px;border:1px solid #0a7ad8;pointer-events:none"></div>
</body></html>
